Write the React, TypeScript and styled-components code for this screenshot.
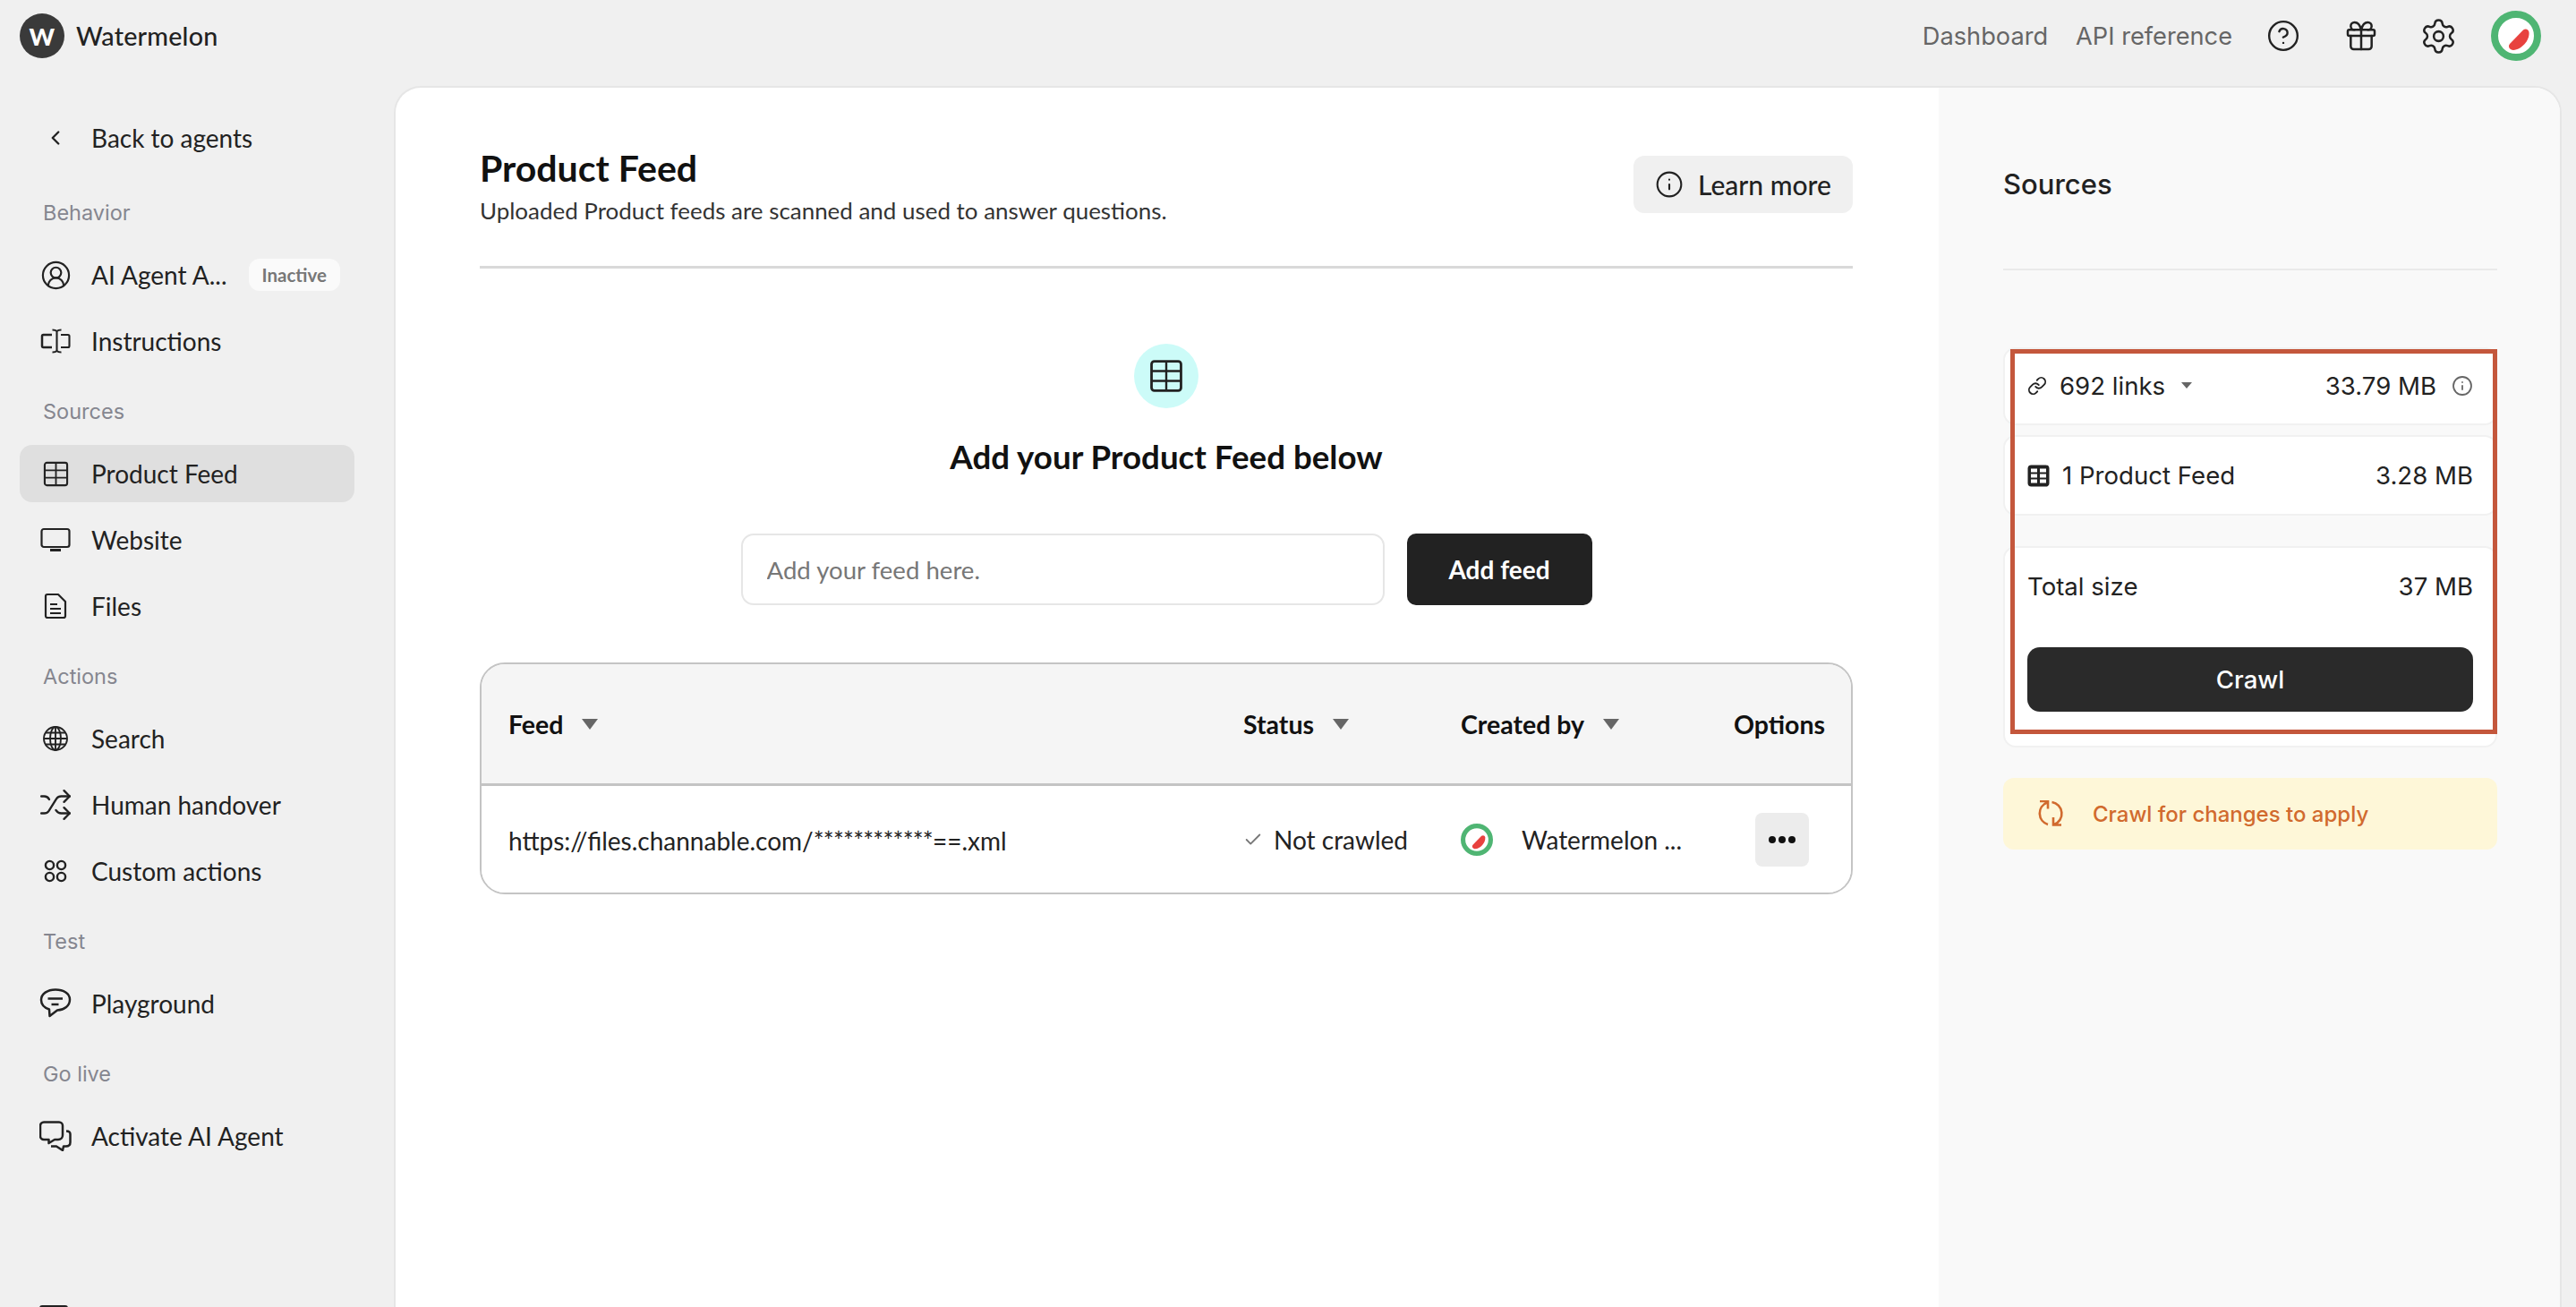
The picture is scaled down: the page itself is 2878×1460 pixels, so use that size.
import React from 'react'
import styled, { createGlobalStyle } from 'styled-components'
import { ChevronLeft, CircleUserRound, Shuffle, CircleHelp, Gift, Settings, Link, Info, Check } from 'lucide-react'

const GlobalStyle = createGlobalStyle`
  html, body {
    margin: 0;
    padding: 0;
    height: 100%;
    background: #f0f0f0;
    overflow: hidden;
  }
  * {
    box-sizing: border-box;
  }
`

const TableIcon = ({ size = 29 }: { size?: number }) => (
  <svg width={size} height={size} viewBox="0 0 30 30" fill="none" stroke="#222" strokeWidth="2.2">
    <rect x="2" y="2" width="26" height="26" rx="2.5" />
    <path d="M15 2v26M2 10.700h26M2 19.300h26" strokeWidth="1.9" />
  </svg>
)

const FilledTableIcon = () => (
  <svg width="25" height="25" viewBox="0 0 25 25">
    <rect x="0.5" y="0.5" width="24" height="24" rx="4" fill="#222" />
    <path d="M4 4.500h7v4H4zM14 4.500h7v4h-7zM4 10.500h7v4H4zM14 10.500h7v4h-7zM4 16.500h7v4H4zM14 16.500h7v4h-7z" fill="#fff" />
  </svg>
)

const InstructionsIcon = () => (
  <svg width="34" height="28" viewBox="0 0 34 28" fill="none" stroke="#222" strokeWidth="2.5">
    <path d="M13 7H3.500A1.500 1.500 0 0 0 2 8.500v11A1.500 1.500 0 0 0 3.500 21H13" />
    <path d="M23 7h8a1.500 1.500 0 0 1 1.500 1.500v11A1.500 1.500 0 0 1 31 21h-8" strokeWidth="2.100" />
    <path d="M18.500 3v22M13.500 1.500c2.500 0 4 .5 5 1.500 1-1 2.500-1.500 5-1.500M13.500 26.500c2.500 0 4-.5 5-1.500 1 1 2.500 1.500 5 1.500" strokeWidth="2.100" />
  </svg>
)

const MonitorIcon = () => (
  <svg width="34" height="28" viewBox="0 0 34 28" fill="none" stroke="#222" strokeWidth="2.2">
    <rect x="1.500" y="2" width="31" height="20" rx="2.500" />
    <path d="M11 25.500h12" strokeWidth="3" />
  </svg>
)

const FileIcon = () => (
  <svg width="26" height="30" viewBox="0 0 26 30" fill="none" stroke="#222" strokeWidth="2.2" strokeLinejoin="round">
    <path d="M4 2h12l8 8v16a2 2 0 0 1-2 2H4a2 2 0 0 1-2-2V4a2 2 0 0 1 2-2z" />
    <path d="M7 13h8M7 18h12M7 23h12" />
  </svg>
)

const GlobeIcon = () => (
  <svg width="30" height="30" viewBox="0 0 30 30" fill="none" stroke="#222" strokeWidth="1.900">
    <circle cx="15" cy="15" r="13" />
    <ellipse cx="15" cy="15" rx="6" ry="13" />
    <path d="M15 2v26M2 15h26M4 8.500h22M4 21.500h22" />
  </svg>
)

const CirclesIcon = () => (
  <svg width="28" height="28" viewBox="0 0 28 28" fill="none" stroke="#222" strokeWidth="2.400">
    <circle cx="7.500" cy="7.500" r="4.600" />
    <circle cx="20.500" cy="7.500" r="4.600" />
    <circle cx="7.500" cy="20.500" r="4.600" />
    <circle cx="20.500" cy="20.500" r="4.600" />
  </svg>
)

const BubbleIcon = () => (
  <svg width="36" height="34" viewBox="0 0 36 34" fill="none" stroke="#222" strokeWidth="2.500" strokeLinejoin="round">
    <path d="M18 1.500C9 1.500 2 6 2 13c0 5.500 4.500 9 9 10.500l.5 7.500 8.500-6.500C28 24 34 19.500 34 12.500 34 6 27 1.500 18 1.500z" />
    <path d="M9.500 11.500H26M13.500 18h8" />
  </svg>
)

const BubblesIcon = () => (
  <svg width="36" height="34" viewBox="0 0 36 34" fill="none" stroke="#222" strokeWidth="2.500" strokeLinejoin="round">
    <path d="M5 1.500h17a4 4 0 0 1 4 4V16a5 5 0 0 1-5 5h-4l-6.500 4v-4H5a4 4 0 0 1-4-4V5.500a4 4 0 0 1 4-4z" />
    <path d="M30 11.500c2.500 0 4.500 1 4.500 3.500v9c0 3-2 4.500-5 4.500H27L26 33l-7-4.500h-6" />
  </svg>
)

const RefreshIcon = () => (
  <svg width="30" height="30" viewBox="0 0 30 30" fill="none" stroke="#d16a2e" strokeWidth="2.600">
    <path d="M12 27A13 13 0 0 1 11 2.500M3 1h9v8.500" />
    <path d="M16.500 2A13 13 0 0 1 19 27M18 19v8.500h9" />
  </svg>
)

const WatermelonAvatar = ({ size }: { size: number }) => (
  <svg width={size} height={size} viewBox="0 0 56 56">
    <circle cx="28" cy="28" r="24" fill="#fff" stroke="#4fb573" strokeWidth="8" />
    <path d="M21 37l15-15.500c2.500-2 6-1 6.500 2.500 1 9-8.500 19.500-17.500 20-4 0-6.500-4-4-7z" fill="#e8423f" />
  </svg>
)

const Page = styled.div`
  width: 2878px;
  height: 1460px;
  display: grid;
  grid-template-columns: 440px 1fr;
  grid-template-rows: 96px 1fr;
  background: #f0f0f0;
  font-family: Lato, 'Liberation Sans', sans-serif;
  color: #222;
  overflow: hidden;
`

const TopBar = styled.header`
  grid-column: 1 / 3;
  display: flex;
  align-items: center;
  justify-content: space-between;
  padding: 0 24px 16px 22px;
`

const Brand = styled.div`
  display: flex;
  align-items: center;
  gap: 13px;
  font-size: 28.700px;
  font-weight: 500;
  letter-spacing: 0.2px;
`

const LogoMark = styled.div`
  width: 50px;
  height: 50px;
  border-radius: 50%;
  background: #3a3a3a;
  color: #fff;
  display: flex;
  align-items: center;
  justify-content: center;
  font-size: 27px;
  font-weight: 900;
`

const TopNav = styled.nav`
  display: flex;
  align-items: center;
  font-family: Inter, sans-serif;
`

const TopLink = styled.a`
  font-size: 27.200px;
  color: #666;
  margin-right: 31px;
  & + & {
    margin-right: 14px;
  }
`

const TopIcon = styled.span`
  width: 86.500px;
  display: flex;
  justify-content: center;
  color: #222;
`

const Sidebar = styled.aside`
  padding: 26px 44px 0 22px;
  display: flex;
  flex-direction: column;
  overflow: hidden;
`

const NavSection = styled.div<{ $first?: boolean }>`
  display: flex;
  flex-direction: column;
  gap: 10px;
  margin-bottom: ${(p) => (p.$first ? 36 : 31)}px;
`

const SectionLabel = styled.div`
  height: 30px;
  line-height: 30px;
  padding-top: 1px;
  margin: 0 0 13px 26px;
  font-family: Inter, sans-serif;
  font-size: 23.500px;
  color: #85868f;
`

const NavItem = styled.div<{ $active?: boolean }>`
  height: 64px;
  flex: none;
  display: flex;
  align-items: center;
  border-radius: 14px;
  background: ${(p) => (p.$active ? '#dfdfdf' : 'transparent')};
  font-size: 28px;
  color: #222;
`

const NavIcon = styled.span`
  width: 80px;
  flex: none;
  display: flex;
  justify-content: center;
`

const Badge = styled.span`
  margin-left: 24px;
  height: 36px;
  padding: 0 15px;
  display: flex;
  align-items: center;
  border-radius: 12px;
  background: #fafafa;
  font-size: 20.500px;
  font-weight: 700;
  color: #777;
`

const Card = styled.main`
  display: flex;
  min-width: 0;
  margin-right: 16px;
  background: #fff;
  border: 2px solid #e6e6e6;
  border-bottom: 0;
  border-radius: 30px 30px 0 0;
  overflow: hidden;
`

const Content = styled.section`
  flex: 1;
  padding: 0 96px 0 94px;
`

const PageHead = styled.div`
  height: 202px;
  display: flex;
  align-items: flex-start;
  justify-content: space-between;
  border-bottom: 3px solid #d9d9d9;
  padding-top: 67px;
`

const PageTitle = styled.h1`
  margin: 0;
  font-size: 41px;
  line-height: 46px;
  font-weight: 700;
  color: #111;
`

const PageText = styled.p`
  margin: 4px 0 0;
  font-size: 25.950px;
  line-height: 40px;
  color: #333;
`

const LearnButton = styled.button`
  height: 64px;
  width: 245px;
  margin-top: 9px;
  padding: 0 0 0 24px;
  display: flex;
  align-items: center;
  gap: 16px;
  border: 0;
  border-radius: 12px;
  background: #f0f0f0;
  font: 500 30px Lato, sans-serif;
  color: #222;
`

const EmptyState = styled.div`
  display: flex;
  flex-direction: column;
  align-items: center;
  padding-top: 84px;
`

const IconCircle = styled.div`
  width: 72px;
  height: 72px;
  border-radius: 50%;
  background: #ccfbf8;
  display: flex;
  align-items: center;
  justify-content: center;
`

const EmptyTitle = styled.h2`
  margin: 31px 0 0;
  font-size: 36.700px;
  line-height: 46px;
  font-weight: 700;
  color: #111;
`

const FeedForm = styled.div`
  margin-top: 63px;
  display: flex;
  gap: 25px;
`

const FeedInput = styled.input`
  width: 719px;
  height: 80px;
  padding: 0 27px;
  border: 2px solid #e6e6e6;
  border-radius: 14px;
  background: #fff;
  font: 400 27.600px Lato, sans-serif;
  outline: none;
  &::placeholder {
    color: #777;
    opacity: 1;
  }
`

const AddButton = styled.button`
  width: 207px;
  height: 80px;
  border: 0;
  border-radius: 10px;
  background: #222;
  color: #fff;
  font: 700 28px Lato, sans-serif;
`

const TableBox = styled.div`
  margin-top: 64px;
  border: 2px solid #c4c4c4;
  border-radius: 28px;
  overflow: hidden;
`

const TableRow = styled.div<{ $head?: boolean }>`
  display: grid;
  grid-template-columns: 821px 243px 305px 1fr;
  align-items: center;
  height: ${(p) => (p.$head ? '136px' : '119px')};
  padding-left: 30px;
  background: ${(p) => (p.$head ? '#f5f5f5' : '#fff')};
  border-bottom: ${(p) => (p.$head ? '3px solid #c4c4c4' : '0')};
  font-size: ${(p) => (p.$head ? '28.500px' : '28px')};
  font-weight: ${(p) => (p.$head ? 700 : 400)};
  color: ${(p) => (p.$head ? '#111' : '#222')};
`

const HeadCell = styled.div`
  display: flex;
  align-items: center;
  gap: 21px;
`

const Caret = styled.span<{ $small?: boolean }>`
  width: 0;
  height: 0;
  border-left: ${(p) => (p.$small ? 6 : 9)}px solid transparent;
  border-right: ${(p) => (p.$small ? 6 : 9)}px solid transparent;
  border-top: ${(p) => (p.$small ? 7 : 12)}px solid #666;
`

const UrlCell = styled.div`
  padding-top: 2px;
`

const MaskedPart = styled.span`
  letter-spacing: -0.800px;
`

const StatusCell = styled.div`
  display: flex;
  align-items: center;
  gap: 12px;
  color: #222;
  svg {
    color: #777;
  }
`

const CreatorCell = styled.div`
  display: flex;
  align-items: center;
  gap: 32px;
`

const OptionsButton = styled.button`
  width: 60px;
  height: 60px;
  margin-left: 24px;
  display: flex;
  align-items: center;
  justify-content: center;
  gap: 3px;
  border: 0;
  border-radius: 8px;
  background: #ececec;
`

const Dot = styled.i`
  width: 8px;
  height: 8px;
  border-radius: 50%;
  background: #111;
`

const SourcesPane = styled.aside`
  width: 694px;
  flex: none;
  padding: 0 70px 0 72px;
  background: #f9f9f9;
  font-family: Inter, sans-serif;
`

const SourcesHead = styled.div`
  height: 204px;
  padding-top: 88px;
  border-bottom: 2px solid #eaeaea;
  font-size: 31px;
  line-height: 40px;
  font-weight: 500;
  color: #222;
`

const Summary = styled.div`
  position: relative;
  margin-top: 86px;
  display: flex;
  flex-direction: column;
`

const Highlight = styled.div`
  position: absolute;
  top: 2px;
  left: 8px;
  right: 0;
  height: 430px;
  border: 5px solid #c4573c;
  pointer-events: none;
`

const SummaryCard = styled.div<{ $gap: number }>`
  margin-bottom: ${(p) => p.$gap}px;
  padding: 0 25px;
  background: #fff;
  border: 2px solid #f1f1f1;
  border-radius: 14px;
`

const SummaryRow = styled.div<{ $height: number; $below?: number }>`
  height: ${(p) => p.$height}px;
  margin-bottom: ${(p) => p.$below ?? 0}px;
  display: flex;
  align-items: center;
  font-size: 27.600px;
  color: #222;
`

const LinkGroup = styled.span`
  display: flex;
  align-items: center;
  gap: 14px;
`

const CaretWrap = styled.span`
  margin-left: 18px;
  display: flex;
`

const Size = styled.span`
  margin-left: auto;
`

const InfoWrap = styled.span`
  margin-left: 17px;
  display: flex;
  color: #666;
`

const CrawlButton = styled.button`
  width: 100%;
  height: 72px;
  margin: 25px 0 38px;
  display: block;
  border: 0;
  border-radius: 14px;
  background: #2a2a2a;
  color: #fff;
  font: 500 27.600px Inter, sans-serif;
`

const Notice = styled.div`
  height: 80px;
  margin-top: 34px;
  padding-left: 38px;
  display: flex;
  align-items: center;
  gap: 32px;
  border-radius: 12px;
  background: #fef7d8;
  font-size: 24px;
  font-weight: 500;
  color: #d16a2e;
`

const FooterIcon = styled.div`
  width: 32px;
  height: 20px;
  margin: auto 0 -18px 22px;
  flex: none;
  border: 2.400px solid #222;
  border-radius: 3px;
`

const navGroups = [
  {
    label: 'Behavior',
    items: [
      { name: 'AI Agent A...', icon: <CircleUserRound size={35} strokeWidth={1.500} />, badge: 'Inactive' },
      { name: 'Instructions', icon: <InstructionsIcon /> },
    ],
  },
  {
    label: 'Sources',
    items: [
      { name: 'Product Feed', icon: <TableIcon />, active: true },
      { name: 'Website', icon: <MonitorIcon /> },
      { name: 'Files', icon: <FileIcon /> },
    ],
  },
  {
    label: 'Actions',
    items: [
      { name: 'Search', icon: <GlobeIcon /> },
      { name: 'Human handover', icon: <Shuffle size={38} strokeWidth={1.500} /> },
      { name: 'Custom actions', icon: <CirclesIcon /> },
    ],
  },
  { label: 'Test', items: [{ name: 'Playground', icon: <BubbleIcon /> }] },
  { label: 'Go live', items: [{ name: 'Activate AI Agent', icon: <BubblesIcon /> }] },
]

export default function App() {
  return (
    <Page>
      <GlobalStyle />
      <TopBar>
        <Brand>
          <LogoMark>W</LogoMark>
          Watermelon
        </Brand>
        <TopNav>
          <TopLink>Dashboard</TopLink>
          <TopLink>API reference</TopLink>
          <TopIcon><CircleHelp size={38} strokeWidth={1.500} /></TopIcon>
          <TopIcon><Gift size={40} strokeWidth={1.500} /></TopIcon>
          <TopIcon><Settings size={43} strokeWidth={1.400} /></TopIcon>
          <TopIcon><WatermelonAvatar size={56} /></TopIcon>
        </TopNav>
      </TopBar>

      <Sidebar>
        <NavSection $first>
          <NavItem>
            <NavIcon><ChevronLeft size={26} strokeWidth={2.200} /></NavIcon>
            Back to agents
          </NavItem>
        </NavSection>
        {navGroups.map((group) => (
          <NavSection key={group.label}>
            <SectionLabel>{group.label}</SectionLabel>
            {group.items.map((item: any) => (
              <NavItem key={item.name} $active={item.active}>
                <NavIcon>{item.icon}</NavIcon>
                {item.name}
                {item.badge && <Badge>{item.badge}</Badge>}
              </NavItem>
            ))}
          </NavSection>
        ))}
        <FooterIcon />
      </Sidebar>

      <Card>
        <Content>
          <PageHead>
            <div>
              <PageTitle>Product Feed</PageTitle>
              <PageText>Uploaded Product feeds are scanned and used to answer questions.</PageText>
            </div>
            <LearnButton>
              <Info size={32} strokeWidth={1.600} />
              Learn more
            </LearnButton>
          </PageHead>

          <EmptyState>
            <IconCircle><TableIcon size={38} /></IconCircle>
            <EmptyTitle>Add your Product Feed below</EmptyTitle>
            <FeedForm>
              <FeedInput placeholder="Add your feed here." />
              <AddButton>Add feed</AddButton>
            </FeedForm>
          </EmptyState>

          <TableBox>
            <TableRow $head>
              <HeadCell>Feed <Caret /></HeadCell>
              <HeadCell>Status <Caret /></HeadCell>
              <HeadCell>Created by <Caret /></HeadCell>
              <HeadCell>Options</HeadCell>
            </TableRow>
            <TableRow>
              <UrlCell>https://files.channable.com/<MaskedPart>************</MaskedPart>==.xml</UrlCell>
              <StatusCell><Check size={22} strokeWidth={2} />Not crawled</StatusCell>
              <CreatorCell><WatermelonAvatar size={36} />Watermelon ...</CreatorCell>
              <OptionsButton><Dot /><Dot /><Dot /></OptionsButton>
            </TableRow>
          </TableBox>
        </Content>

        <SourcesPane>
          <SourcesHead>Sources</SourcesHead>
          <Summary>
            <SummaryCard $gap={11}>
              <SummaryRow $height={81} $below={2}>
                <LinkGroup><Link size={22} strokeWidth={2} />692 links</LinkGroup>
                <CaretWrap><Caret $small /></CaretWrap>
                <Size>33.79 MB</Size>
                <InfoWrap><Info size={24} strokeWidth={1.800} /></InfoWrap>
              </SummaryRow>
            </SummaryCard>
            <SummaryCard $gap={34}>
              <SummaryRow $height={86}>
                <LinkGroup><FilledTableIcon />1 Product Feed</LinkGroup>
                <Size>3.28 MB</Size>
              </SummaryRow>
            </SummaryCard>
            <SummaryCard $gap={0}>
              <SummaryRow $height={86}>
                Total size
                <Size>37 MB</Size>
              </SummaryRow>
              <CrawlButton>Crawl</CrawlButton>
            </SummaryCard>
            <Highlight />
          </Summary>
          <Notice>
            <RefreshIcon />
            Crawl for changes to apply
          </Notice>
        </SourcesPane>
      </Card>
    </Page>
  )
}
